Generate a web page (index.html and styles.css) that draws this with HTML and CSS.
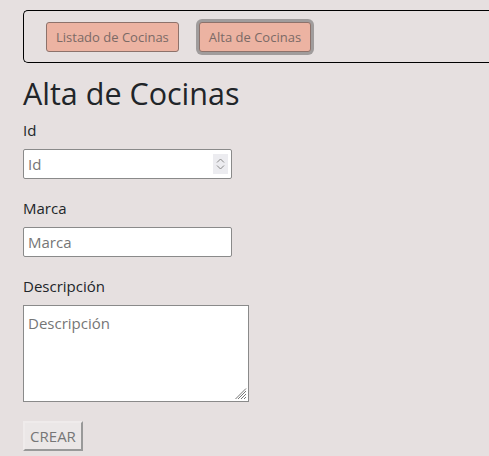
FILE: index.html
```html
<!DOCTYPE html>
<html lang="es">
<head>
<meta charset="utf-8">
<title>Alta de Cocinas</title>
<link rel="stylesheet" href="styles.css">
</head>
<body>
<div class="page">
  <nav class="nav">
    <button class="nav-btn">Listado de Cocinas</button>
    <button class="nav-btn active">Alta de Cocinas</button>
  </nav>
  <h1 class="title">Alta de Cocinas</h1>
  <form class="form">
    <div class="field">
      <label class="label">Id</label>
      <div class="input num">
        <span class="ph">Id</span>
        <span class="spin">
          <svg width="9" height="14" viewBox="0 0 9 14"><path d="M1 5.5 L4.5 2 L8 5.5" fill="none" stroke="#888" stroke-width="1"/><path d="M1 8.5 L4.5 12 L8 8.5" fill="none" stroke="#888" stroke-width="1"/></svg>
        </span>
      </div>
    </div>
    <div class="field">
      <label class="label">Marca</label>
      <div class="input"><span class="ph">Marca</span></div>
    </div>
    <div class="field">
      <label class="label">Descripción</label>
      <div class="textarea">
        <span class="ph">Descripción</span>
        <svg class="grip" width="12" height="12" viewBox="0 0 12 12"><path d="M11 3 L3 11 M11 6 L6 11 M11 9 L9 11 M11 0.5 L0.5 11" stroke="#777" stroke-width="1"/></svg>
      </div>
    </div>
    <button type="button" class="submit">CREAR</button>
  </form>
</div>
</body>
</html>
```
FILE: styles.css
```css
html, body {
  margin: 0;
  padding: 0;
  background: #e6e0e0;
  overflow: hidden;
}
.page {
  padding: 10px 0 0 23px;
  font-family: "Open Sans", "Noto Sans", sans-serif;
  color: #212529;
}
.nav {
  width: 480px;
  border: 1px solid #000;
  border-right: 0;
  border-radius: 5px 0 0 5px;
  display: flex;
  align-items: center;
  gap: 20px;
  padding-left: 22px;
  box-sizing: border-box;
  height: 53px;
}
.nav-btn {
  font-family: inherit;
  font-size: 13px;
  color: #7b6a66;
  background: #ecb3a2;
  border: 1px solid #8d726b;
  border-radius: 3px;
  height: 30px;
  padding: 0 9px;
}
.nav-btn.active {
  box-shadow: 0 0 0 3px #a09c9c;
}
.title {
  font-weight: 400;
  font-size: 30.5px;
  line-height: 1.2;
  margin: 12px 0 8px;
}
.form {
  display: flex;
  flex-direction: column;
}
.field {
  display: flex;
  flex-direction: column;
  margin-bottom: 19px;
}
.label {
  font-size: 15px;
  line-height: 20px;
  margin-bottom: 9px;
}
.input {
  width: 209px;
  height: 30px;
  box-sizing: border-box;
  background: #fff;
  border: 1px solid #8a8a8a;
  border-radius: 2px;
  display: flex;
  align-items: center;
  padding-left: 4px;
}
.ph {
  color: #767676;
  font-size: 15px;
}
.num {
  justify-content: space-between;
  padding-right: 3px;
}
.spin {
  width: 15px;
  height: 20px;
  background: #ececf0;
  display: flex;
  align-items: center;
  justify-content: center;
}
.textarea {
  position: relative;
  width: 226px;
  height: 97px;
  box-sizing: border-box;
  background: #fff;
  border: 1px solid #8a8a8a;
  padding: 6px 4px;
}
.grip {
  position: absolute;
  right: 1px;
  bottom: 1px;
}
.submit {
  align-self: flex-start;
  font-family: inherit;
  font-size: 15px;
  color: #767676;
  background: #ebe7e7;
  border: 2px solid;
  border-color: #efebeb #999 #999 #efebeb;
  height: 30px;
  width: 60px;
  padding: 0;
  margin-top: 0;
}
```
